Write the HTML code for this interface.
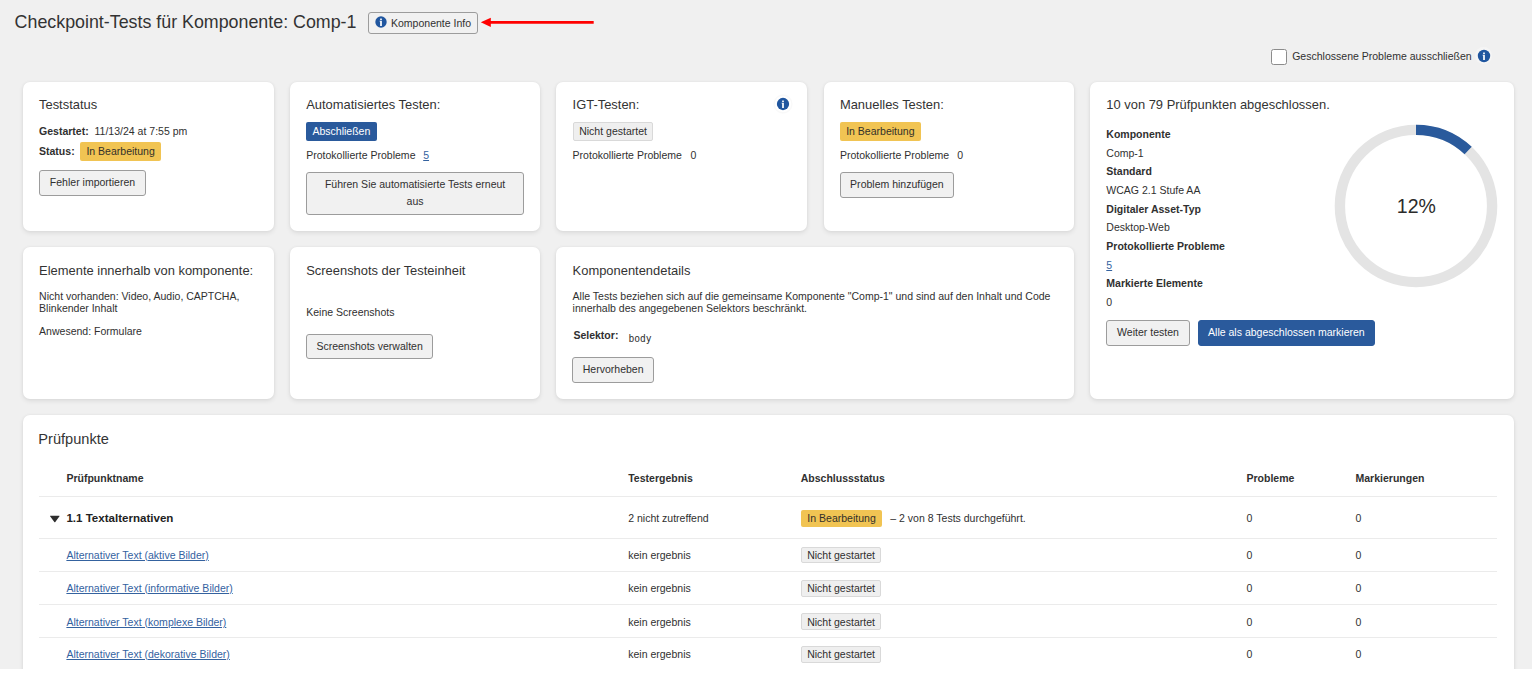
<!DOCTYPE html>
<html lang="de">
<head>
<meta charset="utf-8">
<title>Checkpoint-Tests</title>
<style>
*{box-sizing:border-box;}
html,body{margin:0;padding:0;}
body{width:1532px;height:676px;overflow:hidden;background:#f0f0f0;font-family:"Liberation Sans",Arial,sans-serif;font-size:10.5px;color:#303030;position:relative;}
.abs{position:absolute;}
.card{position:absolute;background:#fff;border-radius:7px;box-shadow:0 2px 5px rgba(0,0,0,.085),0 0 3px rgba(0,0,0,.05);}
.t{position:absolute;white-space:nowrap;font-size:10.53px;line-height:13.12px;color:#303030;}
.t.c{text-align:center;}
.btn{position:absolute;border:1px solid #9c9c9c;border-radius:3px;background:#f1f1f1;}
.btn.pri{background:#2a5a9c;border-color:#2a5a9c;}
.tag{position:absolute;border-radius:2px;}
.tag.y{background:#f1c453;}
.tag.g{background:#efefef;border:1px solid #d9d9d9;}
.tag.bl{background:#2a5a9c;}
a{color:#34629f;text-decoration:underline;}
.hr{position:absolute;left:38.9px;width:1458.2px;height:1px;background:#ebebeb;}
.strip{position:absolute;left:0;top:668.9px;width:1532px;height:8px;background:#fff;}
</style>
</head>
<body>

<div class="t" style="left:14.60px;top:11px;font-size:17.84px;line-height:22px;color:#333;">Checkpoint-Tests für Komponente: Comp-1</div>
<div class="btn" style="left:368.00px;top:12.20px;width:109.50px;height:21.50px;"></div>
<div class="t" style="left:391.00px;top:17px;">Komponente Info</div>
<svg class="abs" style="left:369.85px;top:11.20px;" width="22" height="22" viewBox="0 0 22 22"><circle cx="11.0" cy="11.0" r="5.7" fill="#20569f"/><rect x="10.15" y="7.5" width="1.7" height="1.5" rx="0.3" fill="#fff"/><path d="M9.6,9.65 h2.25 v5.3 h-1.7 v-4.4 h-0.55 z" fill="#fff"/></svg>
<svg class="abs" style="left:478px;top:14px;" width="120" height="18"><line x1="11" y1="8.3" x2="115.7" y2="8.3" stroke="#ff0000" stroke-width="2.8"/><polygon points="2.8,8.3 12.8,3.7 12.8,12.9" fill="#ff0000"/></svg>
<div class="abs" style="left:1271.4px;top:49px;width:16px;height:16px;border:1px solid #8c8c8c;border-radius:2.5px;background:#fff;"></div>
<div class="t" style="left:1292.20px;top:50px;">Geschlossene Probleme ausschließen</div>
<div class="abs" style="left:1475.1px;top:47.3px;width:16.8px;height:16.8px;border-radius:50%;background:#f5f5f5;"></div>
<svg class="abs" style="left:1472.50px;top:44.70px;" width="22" height="22" viewBox="0 0 22 22"><circle cx="11.0" cy="11.0" r="6.2" fill="#20569f"/><rect x="10.15" y="7.5" width="1.7" height="1.5" rx="0.3" fill="#fff"/><path d="M9.6,9.65 h2.25 v5.3 h-1.7 v-4.4 h-0.55 z" fill="#fff"/></svg>
<div class="card" style="left:22.8px;top:81.5px;width:251.00px;height:149.50px;"></div>
<div class="card" style="left:289.9px;top:81.5px;width:250.20px;height:149.50px;"></div>
<div class="card" style="left:556px;top:81.5px;width:251.20px;height:149.50px;"></div>
<div class="card" style="left:823.8px;top:81.5px;width:250.20px;height:149.50px;"></div>
<div class="card" style="left:1090px;top:81.5px;width:423.60px;height:317.60px;"></div>
<div class="card" style="left:22.8px;top:246.8px;width:251.00px;height:152.30px;"></div>
<div class="card" style="left:289.9px;top:246.8px;width:250.20px;height:152.30px;"></div>
<div class="card" style="left:556px;top:246.8px;width:518.00px;height:152.30px;"></div>
<div class="card" style="left:22.8px;top:415.2px;width:1490.80px;height:270.00px;"></div>
<div class="t" style="left:39.00px;top:97px;font-size:12.93px;line-height:16px;color:#333;">Teststatus</div>
<div class="t" style="left:39.00px;top:125px;"><b>Gestartet:</b>&nbsp; 11/13/24 at 7:55 pm</div>
<div class="t" style="left:39.00px;top:145px;font-weight:700;">Status:</div>
<div class="tag y" style="left:80.20px;top:142.40px;width:80.80px;height:18.60px;"></div>
<div class="t c" style="left:80.20px;width:80.80px;top:145px;color:#33302a;">In Bearbeitung</div>
<div class="btn" style="left:39.00px;top:170.20px;width:107.00px;height:25.40px;"></div>
<div class="t c" style="left:39.00px;width:107.00px;top:176px;">Fehler importieren</div>
<div class="t" style="left:306.20px;top:97px;font-size:12.93px;line-height:16px;color:#333;">Automatisiertes Testen:</div>
<div class="tag bl" style="left:306.20px;top:122.10px;width:70.40px;height:18.80px;"></div>
<div class="t c" style="left:306.20px;width:70.40px;top:125px;color:#fff;">Abschließen</div>
<div class="t" style="left:306.20px;top:149px;">Protokollierte Probleme</div>
<div class="t" style="left:423.20px;top:149px;"><a>5</a></div>
<div class="btn" style="left:306.20px;top:172.40px;width:217.80px;height:42.40px;"></div>
<div class="t c" style="left:306.20px;width:217.80px;top:178px;">Führen Sie automatisierte Tests erneut</div>
<div class="t c" style="left:306.20px;width:217.80px;top:195px;">aus</div>
<div class="t" style="left:572.60px;top:97px;font-size:12.93px;line-height:16px;color:#333;">IGT-Testen:</div>
<svg class="abs" style="left:771.70px;top:92.80px;" width="22" height="22" viewBox="0 0 22 22"><circle cx="11.0" cy="11.0" r="8.9" fill="none" stroke="#000" stroke-opacity="0.025" stroke-width="1.6"/><circle cx="11.0" cy="11.0" r="6.15" fill="#20569f"/><rect x="10.15" y="7.5" width="1.7" height="1.5" rx="0.3" fill="#fff"/><path d="M9.6,9.65 h2.25 v5.3 h-1.7 v-4.4 h-0.55 z" fill="#fff"/></svg>
<div class="tag g" style="left:572.70px;top:122.10px;width:80.80px;height:18.80px;"></div>
<div class="t c" style="left:572.70px;width:80.80px;top:125px;">Nicht gestartet</div>
<div class="t" style="left:572.60px;top:149px;">Protokollierte Probleme</div>
<div class="t" style="left:690.40px;top:149px;">0</div>
<div class="t" style="left:839.90px;top:97px;font-size:12.93px;line-height:16px;color:#333;">Manuelles Testen:</div>
<div class="tag y" style="left:839.90px;top:122.10px;width:80.90px;height:18.80px;"></div>
<div class="t c" style="left:839.90px;width:80.90px;top:125px;color:#33302a;">In Bearbeitung</div>
<div class="t" style="left:839.90px;top:149px;">Protokollierte Probleme</div>
<div class="t" style="left:957.30px;top:149px;">0</div>
<div class="btn" style="left:839.90px;top:172.40px;width:114.00px;height:25.40px;"></div>
<div class="t c" style="left:839.90px;width:114.00px;top:178px;">Problem hinzufügen</div>
<div class="t" style="left:1106.30px;top:97px;font-size:12.93px;line-height:16px;color:#333;">10 von 79 Prüfpunkten abgeschlossen.</div>
<div class="t" style="left:1106.30px;top:128px;font-weight:700;">Komponente</div>
<div class="t" style="left:1106.30px;top:147px;">Comp-1</div>
<div class="t" style="left:1106.30px;top:165px;font-weight:700;">Standard</div>
<div class="t" style="left:1106.30px;top:184px;">WCAG 2.1 Stufe AA</div>
<div class="t" style="left:1106.30px;top:203px;font-weight:700;">Digitaler Asset-Typ</div>
<div class="t" style="left:1106.30px;top:221px;">Desktop-Web</div>
<div class="t" style="left:1106.30px;top:240px;font-weight:700;">Protokollierte Probleme</div>
<div class="t" style="left:1106.30px;top:259px;"><a>5</a></div>
<div class="t" style="left:1106.30px;top:277px;font-weight:700;">Markierte Elemente</div>
<div class="t" style="left:1106.30px;top:296px;">0</div>
<div class="btn" style="left:1106.40px;top:320.00px;width:83.20px;height:25.60px;"></div>
<div class="t c" style="left:1106.40px;width:83.20px;top:326px;">Weiter testen</div>
<div class="btn pri" style="left:1197.90px;top:320.00px;width:177.00px;height:25.60px;"></div>
<div class="t c" style="left:1197.90px;width:177.00px;top:326px;color:#fff;">Alle als abgeschlossen markieren</div>
<svg class="abs" style="left:1326.20px;top:116.20px;" width="180" height="180" viewBox="0 0 180 180"><circle cx="90" cy="90" r="76.1" fill="none" stroke="#e4e4e4" stroke-width="10.4"/><circle cx="90" cy="90" r="76.1" fill="none" stroke="#2a5a9c" stroke-width="10.4" stroke-dasharray="57.38 478.15" transform="rotate(-90 90 90)"/><text x="90.3" y="97.0" text-anchor="middle" font-size="19.5" fill="#2b2b2b" font-family="Liberation Sans, Arial, sans-serif">12%</text></svg>
<div class="t" style="left:39.10px;top:263px;font-size:12.93px;line-height:16px;color:#333;">Elemente innerhalb von komponente:</div>
<div class="t" style="left:39.10px;top:290px;">Nicht vorhanden: Video, Audio, CAPTCHA,</div>
<div class="t" style="left:39.10px;top:302px;">Blinkender Inhalt</div>
<div class="t" style="left:39.10px;top:325px;">Anwesend: Formulare</div>
<div class="t" style="left:306.20px;top:263px;font-size:12.93px;line-height:16px;color:#333;">Screenshots der Testeinheit</div>
<div class="t" style="left:306.20px;top:306px;">Keine Screenshots</div>
<div class="btn" style="left:306.20px;top:333.75px;width:126.80px;height:25.60px;"></div>
<div class="t c" style="left:306.20px;width:126.80px;top:340px;">Screenshots verwalten</div>
<div class="t" style="left:572.60px;top:263px;font-size:12.93px;line-height:16px;color:#333;">Komponentendetails</div>
<div class="t" style="left:572.60px;top:290px;">Alle Tests beziehen sich auf die gemeinsame Komponente "Comp-1" und sind auf den Inhalt und Code</div>
<div class="t" style="left:572.60px;top:302px;">innerhalb des angegebenen Selektors beschränkt.</div>
<div class="t" style="left:573.40px;top:329px;font-weight:700;">Selektor:</div>
<div class="t" style="left:628.5px;top:332.5px;font-family:'DejaVu Sans Mono','Liberation Mono',monospace;font-size:9.6px;line-height:12px;">body</div>
<div class="btn" style="left:572.30px;top:357.40px;width:81.70px;height:25.20px;"></div>
<div class="t c" style="left:572.30px;width:81.70px;top:363px;">Hervorheben</div>
<div class="t" style="left:38.30px;top:430px;font-size:14.6px;line-height:18px;color:#333;">Prüfpunkte</div>
<div class="t" style="left:66.40px;top:472px;font-weight:700;">Prüfpunktname</div>
<div class="t" style="left:628.20px;top:472px;font-weight:700;">Testergebnis</div>
<div class="t" style="left:800.70px;top:472px;font-weight:700;">Abschlussstatus</div>
<div class="t" style="left:1246.50px;top:472px;font-weight:700;">Probleme</div>
<div class="t" style="left:1355.50px;top:472px;font-weight:700;">Markierungen</div>
<div class="hr" style="top:496.0px;"></div>
<div class="hr" style="top:537.6px;"></div>
<div class="hr" style="top:571.0px;"></div>
<div class="hr" style="top:604.1px;"></div>
<div class="hr" style="top:637.1px;"></div>
<svg class="abs" style="left:48.7px;top:515px;" width="11.8" height="8.5" viewBox="0 0 12 8.5" preserveAspectRatio="none"><path d="M1.4,0.8 h9 q0.7,0 0.3,0.55 l-4.3,5.7 q-0.5,0.6 -1,0 l-4.3,-5.7 q-0.4,-0.55 0.3,-0.55 z" fill="#2e2e2e"/></svg>
<div class="t" style="left:66.40px;top:511px;font-size:11.55px;line-height:14px;font-weight:700;color:#222;">1.1 Textalternativen</div>
<div class="t" style="left:628.20px;top:512px;">2 nicht zutreffend</div>
<div class="tag y" style="left:801.10px;top:510.00px;width:80.90px;height:17.40px;"></div>
<div class="t c" style="left:801.10px;width:80.90px;top:512px;color:#33302a;">In Bearbeitung</div>
<div class="t" style="left:890.30px;top:512px;">– 2 von 8 Tests durchgeführt.</div>
<div class="t" style="left:1246.50px;top:512px;">0</div>
<div class="t" style="left:1355.50px;top:512px;">0</div>
<div class="t" style="left:66.40px;top:549px;"><a>Alternativer Text (aktive Bilder)</a></div>
<div class="t" style="left:628.20px;top:549px;">kein ergebnis</div>
<div class="tag g" style="left:801.10px;top:547.00px;width:79.90px;height:16.40px;"></div>
<div class="t c" style="left:801.10px;width:79.90px;top:549px;">Nicht gestartet</div>
<div class="t" style="left:1246.50px;top:549px;">0</div>
<div class="t" style="left:1355.50px;top:549px;">0</div>
<div class="t" style="left:66.40px;top:582px;"><a>Alternativer Text (informative Bilder)</a></div>
<div class="t" style="left:628.20px;top:582px;">kein ergebnis</div>
<div class="tag g" style="left:801.10px;top:580.20px;width:79.90px;height:16.40px;"></div>
<div class="t c" style="left:801.10px;width:79.90px;top:582px;">Nicht gestartet</div>
<div class="t" style="left:1246.50px;top:582px;">0</div>
<div class="t" style="left:1355.50px;top:582px;">0</div>
<div class="t" style="left:66.40px;top:616px;"><a>Alternativer Text (komplexe Bilder)</a></div>
<div class="t" style="left:628.20px;top:616px;">kein ergebnis</div>
<div class="tag g" style="left:801.10px;top:613.40px;width:79.90px;height:16.40px;"></div>
<div class="t c" style="left:801.10px;width:79.90px;top:616px;">Nicht gestartet</div>
<div class="t" style="left:1246.50px;top:616px;">0</div>
<div class="t" style="left:1355.50px;top:616px;">0</div>
<div class="t" style="left:66.40px;top:648px;"><a>Alternativer Text (dekorative Bilder)</a></div>
<div class="t" style="left:628.20px;top:648px;">kein ergebnis</div>
<div class="tag g" style="left:801.10px;top:646.40px;width:79.90px;height:16.40px;"></div>
<div class="t c" style="left:801.10px;width:79.90px;top:648px;">Nicht gestartet</div>
<div class="t" style="left:1246.50px;top:648px;">0</div>
<div class="t" style="left:1355.50px;top:648px;">0</div>
<div class="strip"></div>
</body>
</html>
